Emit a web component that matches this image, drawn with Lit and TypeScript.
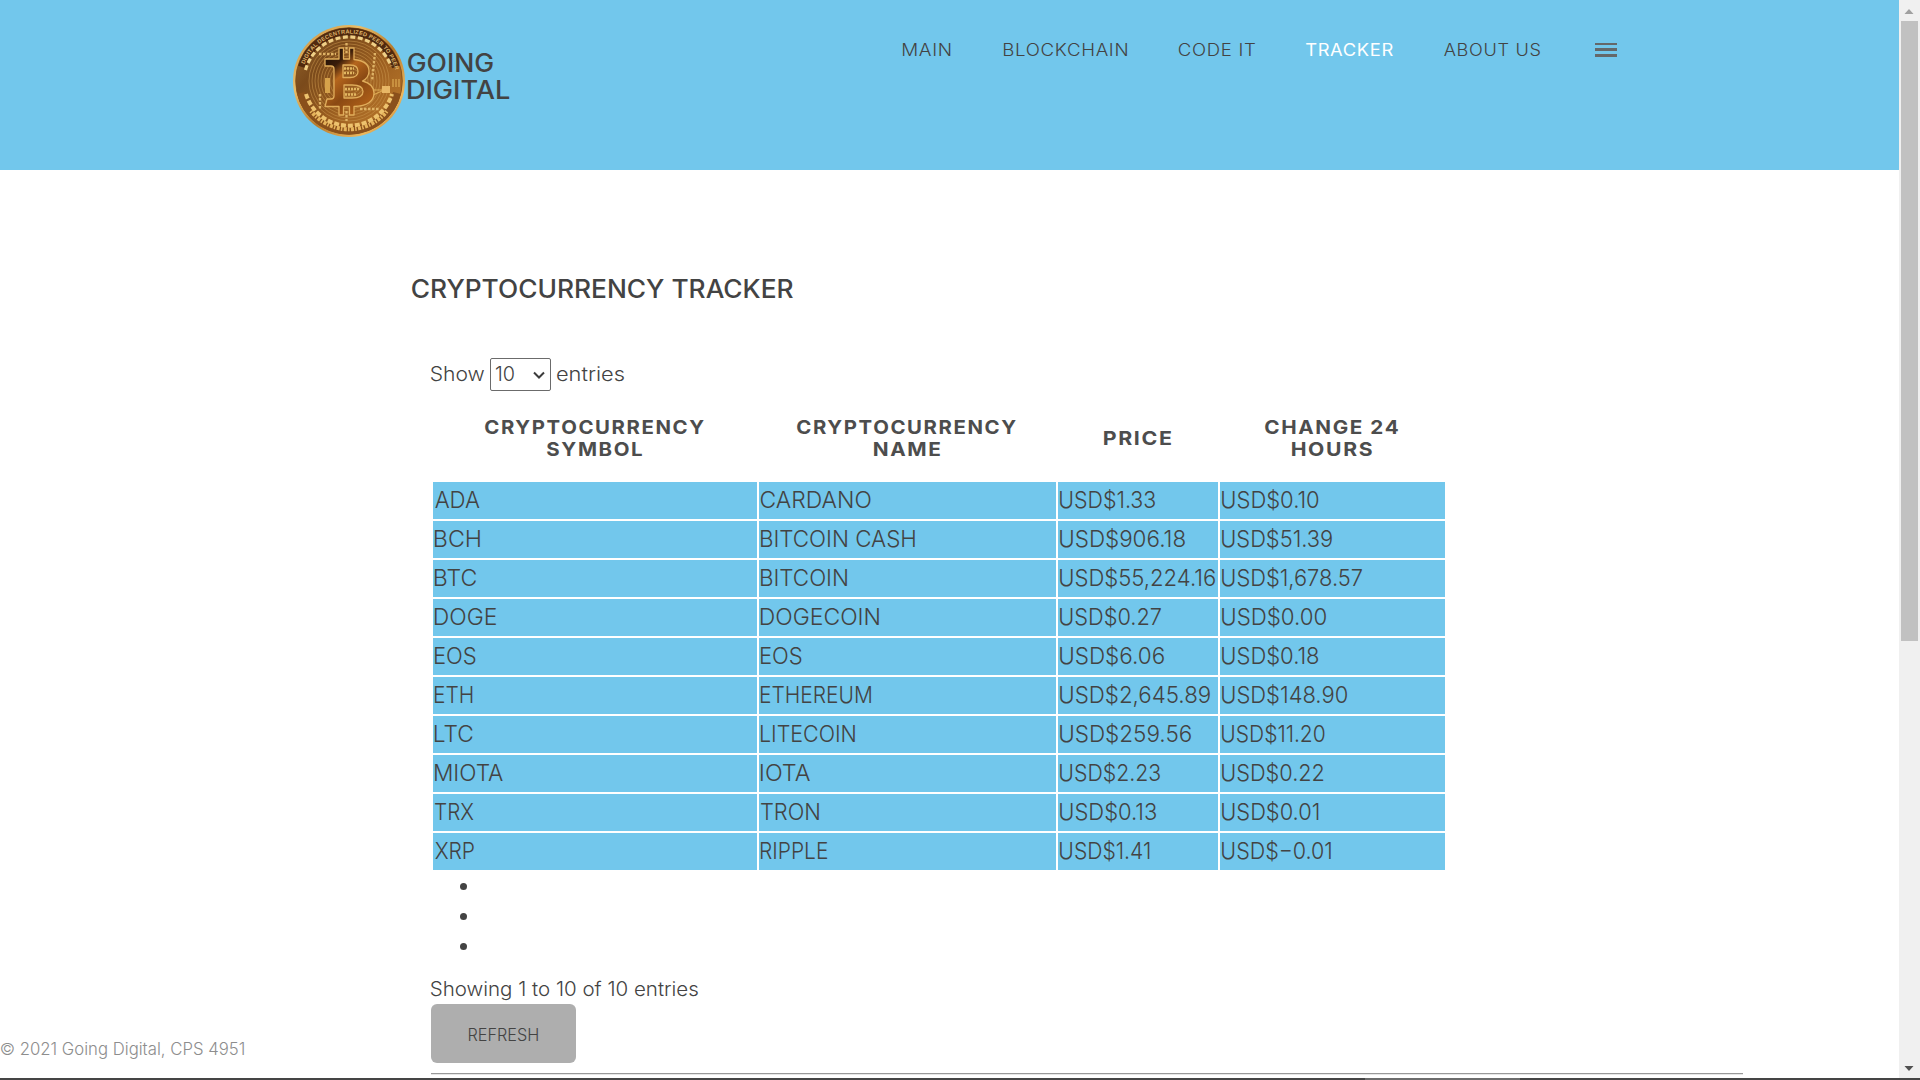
import { LitElement, html, css, svg } from "lit";
import { customElement, property } from "lit/decorators.js";

interface Label { text: string; w: number; }
const L = (text: string, w: number): Label => ({ text, w });

const NAV: Label[] = [L("MAIN", 47.5), L("BLOCKCHAIN", 123), L("CODE IT", 76), L("TRACKER", 87), L("ABOUT US", 96)];

const HEAD: Label[][] = [
  [L("CRYPTOCURRENCY", 219), L("SYMBOL", 95)],
  [L("CRYPTOCURRENCY", 219), L("NAME", 66)],
  [L("PRICE", 67)],
  [L("CHANGE 24", 133), L("HOURS", 80)],
];

const ROWS: Label[][] = [
  [L("ADA", 44.5), L("CARDANO", 109.5), L("USD$1.33", 95), L("USD$0.10", 96.5)],
  [L("BCH", 45), L("BITCOIN CASH", 154), L("USD$906.18", 125), L("USD$51.39", 110)],
  [L("BTC", 41), L("BITCOIN", 86), L("USD$55,224.16", 155), L("USD$1,678.57", 140)],
  [L("DOGE", 61), L("DOGECOIN", 118), L("USD$0.27", 101), L("USD$0.00", 104)],
  [L("EOS", 40.5), L("EOS", 40.5), L("USD$6.06", 104), L("USD$0.18", 96.5)],
  [L("ETH", 37.5), L("ETHEREUM", 110), L("USD$2,645.89", 150), L("USD$148.90", 125)],
  [L("LTC", 37.5), L("LITECOIN", 94), L("USD$259.56", 131), L("USD$11.20", 102.5)],
  [L("MIOTA", 68), L("IOTA", 49), L("USD$2.23", 100), L("USD$0.22", 101.5)],
  [L("TRX", 38.5), L("TRON", 58), L("USD$0.13", 96), L("USD$0.01", 96.5)],
  [L("XRP", 39), L("RIPPLE", 66), L("USD$1.41", 89.5), L("USD$−0.01", 109)],
];

/** One line of text whose visible glyphs span exactly `w` pixels. */
@customElement("fit-text")
class FitText extends LitElement {
  @property() text = "";
  @property({ type: Number }) w = 0;

  static styles = css`
    :host { display: block; white-space: nowrap; flex: none; }
    .line { display: inline-block; transform-origin: 0 50%; vertical-align: top; }
  `;

  protected updated() {
    const line = this.renderRoot.querySelector(".line") as HTMLElement;
    const cs = getComputedStyle(line);
    const ctx = document.createElement("canvas").getContext("2d")!;
    // Measured at 16 times the size, so that rounding to whole pixels does not matter.
    const zoom = 16;
    const spacing = parseFloat(cs.letterSpacing) || 0;
    ctx.font = `${cs.fontWeight} ${parseFloat(cs.fontSize) * zoom}px ${cs.fontFamily}`;
    (ctx as any).letterSpacing = `${spacing * zoom}px`;
    const m = ctx.measureText(this.text);
    const left = -m.actualBoundingBoxLeft / zoom;
    const right = m.actualBoundingBoxRight / zoom;
    const k = this.w / Math.max(1, right - left);
    this.style.width = `${this.w}px`;
    line.style.transform = `scaleX(${k}) translateX(${-left}px)`;
  }

  render() {
    return html`<span class="line">${this.text}</span>`;
  }
}

const fit = (l: Label) => html`<fit-text .text=${l.text} .w=${l.w}></fit-text>`;

@customElement("coin-logo")
class CoinLogo extends LitElement {
  static styles = css`
    :host { display: block; width: 112px; height: 112px; }
    svg { display: block; }
    .rim { font: 700 5.6px "Liberation Sans", sans-serif; }
  `;
  render() {
    const rings = [10, 13, 16, 19, 22, 25, 28, 31, 34, 37, 40];
    return html`
      <svg width="112" height="112" viewBox="0 0 112 112">
        <defs>
          <linearGradient id="edge" x1="0" y1="0" x2="1" y2="1">
            <stop offset="0" stop-color="#c68a39" /><stop offset=".3" stop-color="#e9bd68" />
            <stop offset=".55" stop-color="#b67a2c" /><stop offset=".8" stop-color="#edb75c" /><stop offset="1" stop-color="#a3641d" />
          </linearGradient>
          <linearGradient id="face" x1="0" y1="0" x2="1" y2=".9">
            <stop offset="0" stop-color="#9a6a30" /><stop offset=".3" stop-color="#7a4a1b" />
            <stop offset=".6" stop-color="#9c5f20" /><stop offset="1" stop-color="#bd7a2c" />
          </linearGradient>
          <linearGradient id="sym" gradientUnits="userSpaceOnUse" x1="32" y1="30" x2="80" y2="84">
            <stop offset="0" stop-color="#1d0f07" /><stop offset=".2" stop-color="#3a1d0a" />
            <stop offset=".36" stop-color="#b5661d" /><stop offset=".6" stop-color="#8a4913" /><stop offset="1" stop-color="#b9661a" />
          </linearGradient>
          <path id="arc" d="M8.500 56A47.500 47.500 0 0 1 103.500 56" />
        </defs>
        <circle cx="56" cy="56" r="56" fill="url(#edge)" />
        <circle cx="56" cy="56" r="53.300" fill="url(#face)" stroke="#7b4b1a" stroke-width=".8" />
        <path d="M9 42A49 49 0 0 1 103 42" fill="none" stroke="#50290e" stroke-width="8" />
        <path d="M8 68A49.500 49.500 0 0 0 104 68" fill="none" stroke="#8a501b" stroke-width="8" />
        ${rings.map((r) => svg`<circle cx="56" cy="56" r=${r} fill="none" stroke="#c9954c" stroke-width=".9" opacity=".6" />`)}
        <text class="rim" fill="#deb369"><textPath href="#arc" startOffset="17" textLength="121">DIGITAL DECENTRALIZED PEER TO PEER</textPath></text>
        <path d="M12.500 45A45 45 0 0 1 98 41" fill="none" stroke="#efcf86" stroke-width="3.200" stroke-dasharray="5 2.500" />
        <path d="M13 69A45 45 0 0 0 99 69" fill="none" stroke="#edc26e" stroke-width="4" stroke-dasharray="5 2" />
        <path d="M18 86A48.500 48.500 0 0 0 94 86" fill="none" stroke="#e6b45c" stroke-width="4" stroke-dasharray="1.500 1.400 3 1.200" />
        <g fill="none" stroke="#dfb366" stroke-width="2.300" stroke-dasharray="2.500 1.500">
          <path d="M26 29H43" /><path d="M82 28L79 56" /><path d="M27 69V84" /><path d="M67 84H87" /><path d="M53.500 18V28M53.500 86V96" />
        </g>
        <g fill="none" stroke="#dca952" stroke-width="1.200"><path d="M80 65H89M80 70L89 66" /><path d="M100 54V62M103 54V62M106 54V62" /></g>
        <rect x="89" y="61" width="8" height="7" fill="#e8b766" />
        <rect x="32" y="53" width="5" height="15" fill="#d6a24b" />
        <path fill="url(#sym)" fill-rule="evenodd" stroke="#e0ad5b" stroke-width="1.300" stroke-linejoin="round"
          d="M32 34H46V23H50.500V34H56.500V23H61V34.500C71 35.500 76 39.500 76 46C76 51 73.500 54 69.500 56C77 58 81 62 81 68C81 76.500 74.500 81 61 81.500V90H56.500V81.500H50.500V90H46V81.500H32L34 74H38C40 74 41 73 41 71V44C41 42 40 41 38 41H32Z
             M50 40V52.500H57C62 52.500 65 50.500 65 46.500C65 42 62 40 57 40Z M51 60V73H59C66 73 70 71 70 66.500C70 62 66 60 59 60Z" />
        <path d="M51 43.500H61M51 48H61M52 64H66M52 69.500H64" stroke="#e2b761" stroke-width="2.500" stroke-dasharray="2 1" />
      </svg>`;
  }
}

@customElement("app-root")
class AppRoot extends LitElement {
  static styles = css`
    :host {
      display: block; position: relative; width: 1920px; height: 1080px; overflow: hidden;
      background: #fff; color: #434343; font-family: Inter, "Open Sans", sans-serif; font-weight: 350;
    }
    .window { display: grid; grid-template: 1078px 2px / 1899px 21px; }
    .page { overflow: hidden; }
    header { display: flex; height: 170px; background: #72c7ec; }
    .coin { margin: 25px 0 0 293px; }
    .brand { margin: 50px 0 0 2.500px; width: 493.500px; font-size: 25px; line-height: 27px; font-weight: 550; }
    nav { display: grid; grid-template-columns: 100.5px 175px 127px 138px 151px 22px; height: 24px; margin: 38px 0 0 2px;
      font-size: 16.6px; line-height: 24px; letter-spacing: .6px; font-weight: 330; }
    .active { color: #fff; font-weight: 400; }
    .burger { display: flex; flex-direction: column; gap: 3.500px; padding-top: 4.500px; }
    .bar { height: 2.400px; background: #64686a; }
    main { padding: 104px 0 0 412px; }
    .title { font-size: 25px; line-height: 30px; font-weight: 550; margin: 0; }
    .panel { margin: 54px 0 0 19px; width: 1312px; }
    .length { display: flex; font-size: 19.400px; line-height: 33px; }
    .select { display: flex; justify-content: space-between; box-sizing: border-box; width: 61px; height: 33px; margin: 0 6px;
      padding: 0 5px; border: 1px solid #6b6b6b; border-radius: 2px; line-height: 31px; }
    .select svg { margin-top: 12px; }
    .table { display: grid; grid-template-columns: 324px 297px 160px 225px; gap: 2px; margin: 3px 0 0 2px; }
    .th { display: flex; flex-direction: column; align-items: center; justify-content: center; height: 86px; box-sizing: border-box; padding: 2px 2px 0 0;
      font-size: 19.300px; line-height: 22px; font-weight: 650; letter-spacing: 1.500px; color: #4d4d4d; }
    .td { height: 37px; box-sizing: border-box; background: #72c7ec; padding-left: 2px; font-size: 22.800px; line-height: 36px; }
    .pages { list-style: none; margin: 1px 0 13px; padding: 0 0 0 29px; }
    .page-item { display: flex; align-items: center; height: 30px; }
    .page-item::before { content: ""; width: 7px; height: 7px; border-radius: 50%; background: #434343; }
    .info { font-size: 19.400px; line-height: 30px; }
    .refresh { display: flex; justify-content: center; width: 145px; height: 59px; box-sizing: border-box; padding: 1px 0 0; border: 0;
      border-radius: 6px; background: #aeaeae; color: #434343; font: 350 17.400px/59px Inter, sans-serif; }
    .rule { height: 1px; margin-top: 10px; background: #999; border-bottom: 1px solid #e6e6e6; }
    .copyright { position: absolute; left: 1px; top: 1037px; font-size: 16.600px; line-height: 24px; color: #8d8d8d; }
    .scroll { display: flex; flex-direction: column; align-items: center; background: #f0f0f0; }
    .scroll svg { display: block; }
    .thumb { width: 17px; height: 620px; background: #c1c1c1; }
    .down { margin-top: auto; }
    .edge { grid-column: 1 / 3; display: flex; background: #454545; }
    .edge-light { width: 155px; margin-left: 1365px; background: #6c6c6c; }
  `;

  render() {
    return html`
      <div class="window">
        <div class="page">
          <header>
            <coin-logo class="coin"></coin-logo>
            <div class="brand">${fit(L("GOING", 85))}${fit(L("DIGITAL", 101.5))}</div>
            <nav>
              ${NAV.map((n) => html`<div class=${n.text === "TRACKER" ? "active" : "link"}>${fit(n)}</div>`)}
              <div class="burger"><div class="bar"></div><div class="bar"></div><div class="bar"></div></div>
            </nav>
          </header>
          <main>
            <h3 class="title">${fit(L("CRYPTOCURRENCY TRACKER", 381))}</h3>
            <section class="panel">
              <div class="length">
                ${fit(L("Show", 53))}
                <div class="select">
                  ${fit(L("10", 18))}
                  <svg width="12" height="9" viewBox="0 0 12 9"><path d="M1 1.500L6 6.500L11 1.500" fill="none" stroke="#3c3c3c" stroke-width="2" /></svg>
                </div>
                ${fit(L("entries", 67))}
              </div>
              <div class="table">
                ${HEAD.map((h) => html`<div class="th">${h.map(fit)}</div>`)}
                ${ROWS.map((r) => r.map((c) => html`<div class="td">${fit(c)}</div>`))}
              </div>
              <ul class="pages"><li class="page-item"></li><li class="page-item"></li><li class="page-item"></li></ul>
              <div class="info">${fit(L("Showing 1 to 10 of 10 entries", 267))}</div>
              <button class="refresh">${fit(L("REFRESH", 69))}</button>
              <div class="rule"></div>
            </section>
          </main>
        </div>
        <div class="scroll">
          <svg width="21" height="21"><path d="M5.500 14H14.500L10 9Z" fill="#a0a0a0" /></svg>
          <div class="thumb"></div>
          <svg class="down" width="21" height="21"><path d="M5.500 9H14.500L10 14Z" fill="#505050" /></svg>
        </div>
        <div class="edge"><div class="edge-light"></div></div>
      </div>
      <div class="copyright">${fit(L("© 2021 Going Digital, CPS 4951", 243))}</div>
    `;
  }
}
